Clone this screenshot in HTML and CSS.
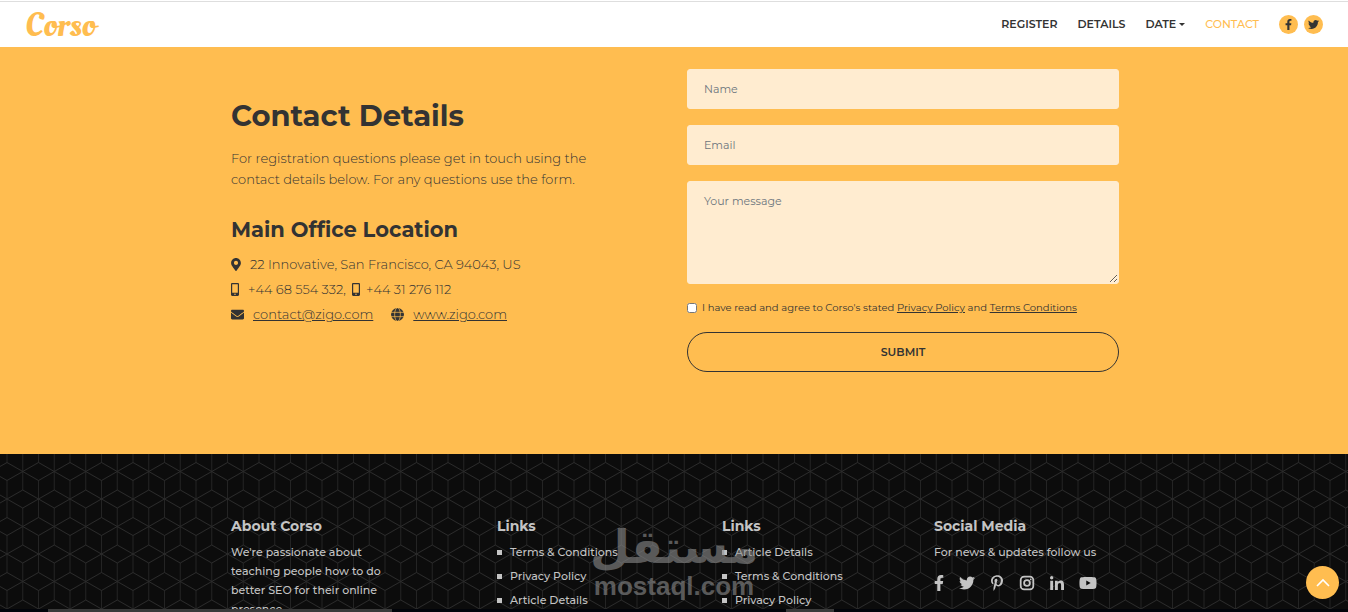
FILE: index.html
```html
<!DOCTYPE html>
<html lang="en">
<head>
  <meta charset="UTF-8">
  <meta name="viewport" content="width=device-width, initial-scale=1.0">
  <title>Corso - Contact</title>
  <link rel="stylesheet" href="styles.css">
</head>
<body>
  <!-- Shared icons -->
  <svg class="sprite" aria-hidden="true">
    <symbol id="facebook" viewBox="0 0 320 512"><path d="M279.14 288l14.22-92.66h-88.91v-60.13c0-25.35 12.42-50.06 52.24-50.06h40.42V6.26S260.43 0 225.36 0c-73.22 0-121.08 44.38-121.08 124.72v70.62H22.89V288h81.39v224h100.17V288z"/></symbol>
    <symbol id="twitter" viewBox="0 0 512 512"><path d="M459.37 151.716c.325 4.548.325 9.097.325 13.645 0 138.72-105.583 298.558-298.558 298.558-59.452 0-114.68-17.219-161.137-47.106 8.447.974 16.568 1.299 25.34 1.299 49.055 0 94.213-16.568 130.274-44.832-46.132-.975-84.792-31.188-98.112-72.772 6.498.974 12.995 1.624 19.818 1.624 9.421 0 18.843-1.3 27.614-3.573-48.081-9.747-84.143-51.98-84.143-102.985v-1.299c13.969 7.797 30.214 12.67 47.431 13.319-28.264-18.843-46.781-51.005-46.781-87.391 0-19.492 5.197-37.36 14.294-52.954 51.655 63.675 129.3 105.258 216.365 109.807-1.624-7.797-2.599-15.918-2.599-24.04 0-57.828 46.782-104.934 104.934-104.934 30.213 0 57.502 12.67 76.67 33.137 23.715-4.548 46.456-13.32 66.599-25.34-7.798 24.366-24.366 44.833-46.132 57.827 21.117-2.273 41.584-8.122 60.426-16.243-14.292 20.791-32.161 39.308-52.628 54.253z"/></symbol>
    <symbol id="mobile" viewBox="0 0 320 512"><path d="M272 0H48C21.5 0 0 21.5 0 48v416c0 26.5 21.5 48 48 48h224c26.5 0 48-21.5 48-48V48c0-26.5-21.5-48-48-48zM160 480c-17.7 0-32-14.3-32-32s14.3-32 32-32 32 14.3 32 32-14.3 32-32 32zm112-108c0 6.6-5.4 12-12 12H60c-6.6 0-12-5.4-12-12V60c0-6.6 5.4-12 12-12h200c6.6 0 12 5.4 12 12v312z"/></symbol>
  </svg>

  <!-- Navigation -->
  <header class="navbar">
    <a class="logo" href="#">Corso</a>
    <nav class="menu">
      <a href="#register">REGISTER</a>
      <a href="#details">DETAILS</a>
      <a class="dropdown" href="#date">DATE</a>
      <a class="active" href="#contact">CONTACT</a>
      <div class="nav-social">
        <a href="#facebook" aria-label="Facebook"><svg class="icon"><use href="#facebook"/></svg></a>
        <a href="#twitter" aria-label="Twitter"><svg class="icon"><use href="#twitter"/></svg></a>
      </div>
    </nav>
  </header>

  <!-- Contact -->
  <main class="contact" id="contact">
    <div class="container contact-grid">
      <section class="info">
        <h2>Contact Details</h2>
        <p>For registration questions please get in touch using the contact details below. For any questions use the form.</p>
        <h3>Main Office Location</h3>
        <ul class="address">
          <li>
            <svg class="icon pin" viewBox="0 0 384 512"><path d="M172.268 501.67C26.97 291.031 0 269.413 0 192 0 85.961 85.961 0 192 0s192 85.961 192 192c0 77.413-26.97 99.031-172.268 309.67-9.535 13.774-29.93 13.773-39.464 0zM192 272c44.183 0 80-35.817 80-80s-35.817-80-80-80-80 35.817-80 80 35.817 80 80 80z"/></svg>
            <span>22 Innovative, San Francisco, CA 94043, US</span>
          </li>
          <li>
            <svg class="icon phone"><use href="#mobile"/></svg>
            <span>+44 68 554 332,</span>
            <svg class="icon phone second"><use href="#mobile"/></svg>
            <span>+44 31 276 112</span>
          </li>
          <li>
            <svg class="icon mail" viewBox="0 0 512 512"><path d="M502.3 190.8c3.9-3.1 9.7-.2 9.7 4.7V400c0 26.5-21.5 48-48 48H48c-26.5 0-48-21.5-48-48V195.6c0-5 5.7-7.8 9.7-4.7 22.4 17.4 52.1 39.5 154.1 113.6 21.1 15.4 56.7 47.8 92.2 47.6 35.7.3 72-32.8 92.3-47.6 102-74.1 131.6-96.3 154-113.7zM256 320c23.2.4 56.6-29.2 73.4-41.4 132.7-96.3 142.8-104.7 173.4-128.7 5.8-4.5 9.2-11.5 9.2-18.9v-19c0-26.5-21.5-48-48-48H48c-26.5 0-48 21.5-48 48v19c0 7.4 3.4 14.3 9.2 18.9 30.6 23.9 40.7 32.4 173.4 128.7 16.8 12.2 50.2 41.8 73.4 41.4z"/></svg>
            <a href="mailto:contact@zigo.com">contact@zigo.com</a>
            <svg class="icon globe" viewBox="0 0 24 24"><circle cx="12" cy="12" r="12"/><g fill="none" stroke="#ffbd50" stroke-width="1.3"><ellipse cx="12" cy="12" rx="5.3" ry="12.5"/><path d="M0 8h24M0 16h24"/></g></svg>
            <a href="#zigo">www.zigo.com</a>
          </li>
        </ul>
      </section>

      <form class="form">
        <input class="field" type="text" placeholder="Name" aria-label="Name">
        <input class="field" type="email" placeholder="Email" aria-label="Email">
        <textarea class="field message" placeholder="Your message" aria-label="Your message"></textarea>
        <div class="terms">
          <input type="checkbox" id="terms">
          <label for="terms">I have read and agree to Corso's stated <a href="#privacy">Privacy Policy</a> and <a href="#conditions">Terms Conditions</a></label>
        </div>
        <button class="submit" type="submit">SUBMIT</button>
      </form>
    </div>
  </main>

  <!-- Footer -->
  <footer class="footer">
    <div class="container footer-grid">
      <section>
        <h4>About Corso</h4>
        <p class="about">We're passionate about teaching people how to do better SEO for their online presence</p>
      </section>
      <section>
        <h4>Links</h4>
        <ul class="links">
          <li><a href="#conditions">Terms &amp; Conditions</a></li>
          <li><a href="#privacy">Privacy Policy</a></li>
          <li><a href="#article">Article Details</a></li>
        </ul>
      </section>
      <section>
        <h4>Links</h4>
        <ul class="links">
          <li><a href="#article">Article Details</a></li>
          <li><a href="#conditions">Terms &amp; Conditions</a></li>
          <li><a href="#privacy">Privacy Policy</a></li>
        </ul>
      </section>
      <section>
        <h4>Social Media</h4>
        <p>For news &amp; updates follow us</p>
        <div class="social">
          <a href="#facebook" aria-label="Facebook"><svg class="icon narrow"><use href="#facebook"/></svg></a>
          <a href="#twitter" aria-label="Twitter"><svg class="icon"><use href="#twitter"/></svg></a>
          <a href="#pinterest" aria-label="Pinterest"><svg class="icon medium" viewBox="0 0 384 512"><path d="M204 6.5C101.4 6.5 0 74.9 0 185.6 0 256 39.6 296 63.6 296c9.9 0 15.6-27.6 15.6-35.4 0-9.3-23.7-29.1-23.7-67.8 0-80.4 61.2-137.4 140.4-137.4 68.1 0 118.5 38.7 118.5 109.8 0 53.1-21.3 152.7-90.3 152.7-24.9 0-46.2-18-46.2-43.8 0-37.8 26.4-74.4 26.4-113.4 0-66.2-93.9-54.2-93.9 25.8 0 16.8 2.1 35.4 9.6 50.7-13.8 59.4-42 147.9-42 209.1 0 18.9 2.7 37.5 4.5 56.4 3.4 3.8 1.7 3.4 6.9 1.5 50.4-69 48.6-82.5 71.4-172.8 12.3 23.4 44.1 36 69.3 36 106.2 0 153.9-103.5 153.9-196.8C384 71.3 298.2 6.5 204 6.5z"/></svg></a>
          <a href="#instagram" aria-label="Instagram"><svg class="icon" viewBox="0 0 16 16"><rect x="1.7" y="1.7" width="12.6" height="12.6" rx="3.4" fill="none" stroke="currentColor" stroke-width="1.8"/><circle cx="8" cy="8" r="2.9" fill="none" stroke="currentColor" stroke-width="1.8"/><circle cx="11.7" cy="4.3" r=".9"/></svg></a>
          <a href="#linkedin" aria-label="LinkedIn"><svg class="icon linkedin" viewBox="0 0 448 448"><path d="M100.28 448H7.4V148.9h92.88zM53.79 108.1C24.09 108.1 0 83.5 0 53.8a53.79 53.79 0 0 1 107.58 0c0 29.7-24.1 54.3-53.79 54.3zM447.9 448h-92.68V302.4c0-34.7-.7-79.2-48.29-79.2-48.29 0-55.69 37.7-55.69 76.7V448h-92.78V148.9h89.08v40.8h1.3c12.4-23.5 42.69-48.3 87.88-48.3 94 0 111.28 61.9 111.28 142.3V448z"/></svg></a>
          <a href="#youtube" aria-label="YouTube"><svg class="icon wide" viewBox="0 0 576 512"><path d="M549.655 124.083c-6.281-23.65-24.787-42.276-48.284-48.597C458.781 64 288 64 288 64S117.22 64 74.629 75.486c-23.497 6.322-42.003 24.947-48.284 48.597-11.412 42.867-11.412 132.305-11.412 132.305s0 89.438 11.412 132.305c6.281 23.65 24.787 41.5 48.284 47.821C117.22 448 288 448 288 448s170.78 0 213.371-11.486c23.497-6.321 42.003-24.171 48.284-47.821 11.412-42.867 11.412-132.305 11.412-132.305s0-89.438-11.412-132.305zm-317.51 213.508V175.185l142.739 81.205-142.739 81.201z"/></svg></a>
        </div>
      </section>
    </div>
  </footer>

  <!-- Watermark -->
  <div class="watermark">
    <span class="mark-ar" lang="ar" dir="rtl">مستقل</span>
    <span class="mark-en">mostaql.com</span>
  </div>

  <a class="to-top" href="#" aria-label="Back to top"><svg viewBox="0 0 16 10"><path d="M2 8l6-6 6 6" fill="none" stroke="#fff" stroke-width="1.6"/></svg></a>
  <div class="bottom-strip"></div>
</body>
</html>
```
FILE: styles.css
```css
* {
  box-sizing: border-box;
}
body {
  margin: 0;
  height: 100vh;
  overflow: hidden;
  display: flex;
  flex-direction: column;
  position: relative;
  font-family: "Montserrat", "Inter", sans-serif;
  font-size: 13px;
  color: #333;
  background-color: #0c0c0c;
}
h2, h3, h4, p, ul {
  margin: 0;
  padding: 0;
}
h2, h3, h4 {
  font-weight: 700;
}
ul {
  list-style: none;
}
a {
  color: inherit;
}
.sprite {
  display: none;
}
.icon {
  width: 16px;
  height: 16px;
  fill: currentColor;
  flex: none;
}
.container {
  width: 100%;
  max-width: 890px;
  margin: 0 auto;
}

/* Navigation */
.navbar {
  flex: none;
  display: flex;
  justify-content: space-between;
  align-items: center;
  height: 47px;
  padding: 0 25px;
  background: linear-gradient(#dedede, #dedede) 0 1px / 100% 1px no-repeat #fff;
}
.logo {
  padding-top: 4px;
  font-family: "Oleo Script", "Lobster", "Liberation Serif", serif;
  font-size: 34px;
  font-weight: 400;
  line-height: 40px;
  color: #ffbd50;
  text-decoration: none;
}
.menu {
  display: flex;
  align-items: center;
  gap: 20px;
  padding-top: 1px;
  font-size: 11px;
  font-weight: 600;
}
.menu a {
  text-decoration: none;
}
.menu .active {
  color: #ffbd50;
  font-weight: 500;
}
.dropdown {
  display: flex;
  align-items: center;
  gap: 3px;
}
.dropdown::after {
  content: "";
  border: 3px solid transparent;
  border-top-color: currentColor;
  border-bottom: 0;
}
.nav-social {
  display: flex;
  gap: 6px;
}
.nav-social a {
  display: flex;
  align-items: center;
  justify-content: center;
  width: 19px;
  height: 19px;
  border-radius: 50%;
  background-color: #ffbd50;
}
.nav-social .icon {
  width: 11px;
  height: 11px;
}

/* Contact */
.contact {
  flex: none;
  padding: 22px 0 82px;
  background-color: #ffbd50;
}
.contact-grid {
  display: grid;
  grid-template-columns: 1fr 1fr;
  gap: 26px;
}
.info {
  padding: 29px 60px 0 2px;
}
.info h2 {
  margin-bottom: 14px;
  font-size: 29px;
  line-height: 36px;
}
.info p {
  font-weight: 300;
  line-height: 21px;
}
.info h3 {
  margin: 26px 0 8px;
  font-size: 21px;
  line-height: 28px;
}
.address li {
  display: flex;
  align-items: center;
  font-weight: 300;
  line-height: 25px;
}
.address .icon {
  height: 13px;
}
.address .pin {
  width: 10px;
  margin-right: 9px;
}
.address .phone {
  width: 8px;
  margin-right: 9px;
}
.address .second {
  margin: 0 6px;
}
.address .mail {
  width: 13px;
  margin-right: 9px;
}
.address .globe {
  width: 13px;
  margin: 0 9px 0 18px;
}

/* Form */
.form {
  display: flex;
  flex-direction: column;
  gap: 16px;
}
.field {
  width: 100%;
  height: 40px;
  padding: 0 16px;
  border: 1px solid #ffecd0;
  border-radius: 3px;
  background-color: #ffecd0;
  font: 400 11px "Montserrat", "Inter", sans-serif;
  color: #333;
}
.field::placeholder {
  color: #6c757d;
}
.message {
  display: block;
  height: 103px;
  padding: 12px 16px;
  resize: vertical;
}
.terms {
  display: flex;
  align-items: center;
  gap: 5px;
  font-size: 10px;
  line-height: 16px;
}
.terms input {
  width: 10px;
  height: 10px;
  margin: 0;
}
.submit {
  height: 40px;
  border: 1px solid #333;
  border-radius: 20px;
  background: none;
  font: 600 11px "Montserrat", "Inter", sans-serif;
  color: #333;
}

/* Footer */
.footer {
  flex: 1;
  min-height: 0;
  padding-top: 62px;
  font-size: 11px;
  font-weight: 500;
  line-height: 20px;
  color: #c4c4c4;
  /* Hexagon cube tile */
  background: #0c0c0c url("data:image/svg+xml,%3Csvg xmlns='http://www.w3.org/2000/svg' width='63' height='55' viewBox='0 0 63 55'%3E%3Cg fill='none' stroke='%232b2b2b'%3E%3Cpath stroke='%23242424' d='M7 0v8.5M7 26.5V55M38.5 0v8.5M38.5 26.5V55M22.75 0v36M22.75 54v1M54.25 0v36M54.25 54v1'/%3E%3Cpath d='M7 8.5l15.75 9L7 26.5l-15.75-9zM38.5 8.5l15.75 9-15.75 9-15.75-9zM70 8.5l15.75 9-15.75 9-15.75-9zM22.75 36l15.75 9-15.75 9L7 45zM54.25 36L70 45l-15.75 9-15.75-9zM-8.75 36L7 45l-15.75 9-15.75-9z'/%3E%3C/g%3E%3C/svg%3E") 0 0 / 63px 55px;
}
.footer-grid {
  display: grid;
  grid-template-columns: 266fr 225fr 212fr 185fr;
  padding-left: 2px;
}
.footer h4 {
  margin-bottom: 6px;
  font-size: 14px;
}
.about {
  max-width: 165px;
  padding-top: 1px;
  line-height: 19px;
}
.links li {
  display: flex;
  align-items: center;
  gap: 8px;
  margin-bottom: 4px;
}
.links li::before {
  content: "";
  width: 5px;
  height: 5px;
  background-color: #c4c4c4;
}
.links a {
  text-decoration: none;
}
.social {
  display: flex;
  align-items: center;
  gap: 15px;
  margin-top: 13px;
}
.social a {
  display: flex;
}
.social .narrow {
  width: 10px;
}
.social .medium,
.social .linkedin {
  width: 14px;
}
.social .wide {
  width: 18px;
}

/* Overlays */
.watermark {
  position: absolute;
  left: 0;
  right: 0;
  bottom: 11px;
  display: flex;
  flex-direction: column;
  align-items: center;
  font-weight: bold;
  color: #8c8c8c;
  opacity: 0.6;
  pointer-events: none;
}
.mark-ar {
  font-family: "DejaVu Sans", sans-serif;
  font-size: 46px;
  line-height: 48px;
}
.mark-en {
  font-family: "Liberation Sans", sans-serif;
  font-size: 26px;
  line-height: 30px;
}
.to-top {
  position: fixed;
  right: 9px;
  bottom: 13px;
  display: flex;
  align-items: center;
  justify-content: center;
  width: 33px;
  height: 33px;
  border-radius: 50%;
  background-color: #ffbd50;
}
.to-top svg {
  width: 16px;
  height: 10px;
}
.bottom-strip {
  position: fixed;
  left: 0;
  right: 0;
  bottom: 0;
  height: 3px;
  background: linear-gradient(#3a3a3a, #3a3a3a) 48px 0 / 344px 3px no-repeat,
    linear-gradient(#3a3a3a, #3a3a3a) 786px 0 / 48px 3px no-repeat #02040a;
}
```
